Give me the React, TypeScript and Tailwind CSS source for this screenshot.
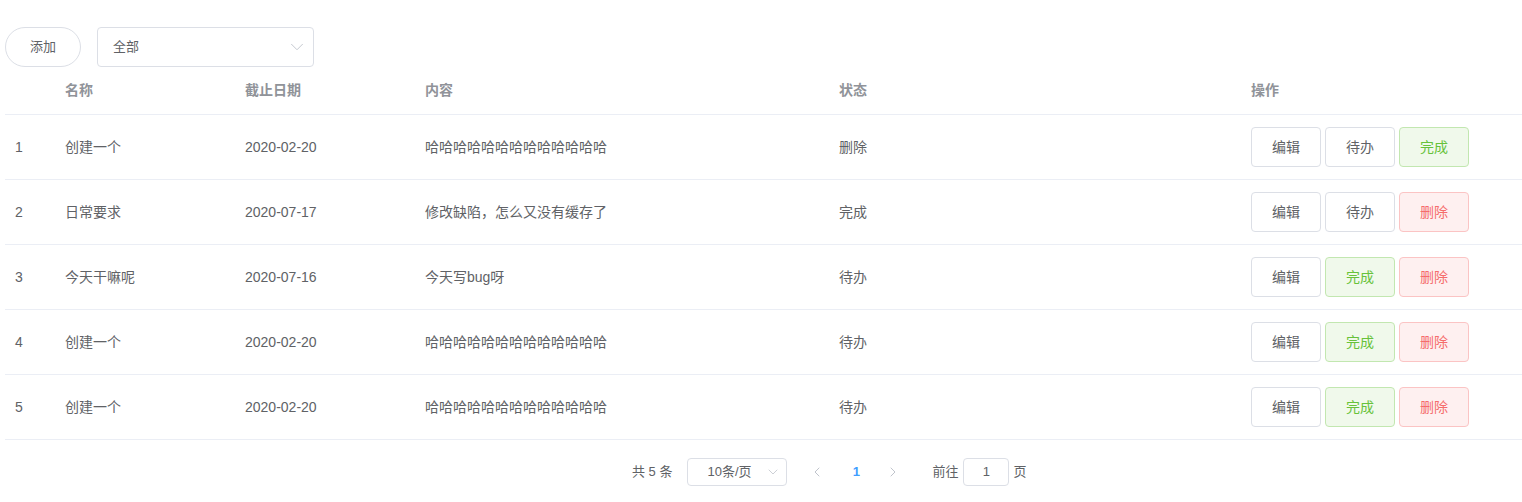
import { ChevronDown, ChevronLeft, ChevronRight } from "lucide-react";

type Row = { id: number; name: string; date: string; content: string; status: string; actions: ("edit" | "todo" | "done" | "del")[] };

const rows: Row[] = [
  { id: 1, name: "创建一个", date: "2020-02-20", content: "哈哈哈哈哈哈哈哈哈哈哈哈哈", status: "删除", actions: ["edit", "todo", "done"] },
  { id: 2, name: "日常要求", date: "2020-07-17", content: "修改缺陷，怎么又没有缓存了", status: "完成", actions: ["edit", "todo", "del"] },
  { id: 3, name: "今天干嘛呢", date: "2020-07-16", content: "今天写bug呀", status: "待办", actions: ["edit", "done", "del"] },
  { id: 4, name: "创建一个", date: "2020-02-20", content: "哈哈哈哈哈哈哈哈哈哈哈哈哈", status: "待办", actions: ["edit", "done", "del"] },
  { id: 5, name: "创建一个", date: "2020-02-20", content: "哈哈哈哈哈哈哈哈哈哈哈哈哈", status: "待办", actions: ["edit", "done", "del"] },
];

const btnStyle = {
  edit: "border-[#dcdfe6] bg-white text-[#606266]",
  todo: "border-[#dcdfe6] bg-white text-[#606266]",
  done: "border-[#c2e7b0] bg-[#f0f9eb] text-[#67c23a]",
  del: "border-[#fbc4c4] bg-[#fef0f0] text-[#f56c6c]",
};
const btnLabel = { edit: "编辑", todo: "待办", done: "完成", del: "删除" };

const cols = "grid grid-cols-[50px_180px_180px_414px_412px_1fr]";

export default function App() {
  return (
    <div className="min-h-screen bg-white pl-[5px] pt-[27px] text-[14px] text-[#606266]" style={{ fontFamily: '"Liberation Sans", "Noto Sans CJK SC", sans-serif' }}>
      <div className="flex items-center gap-4">
        <button className="h-10 w-[76px] rounded-full border border-[#dcdfe6] bg-white text-[13px] text-[#606266]">添加</button>
        <div className="flex h-10 w-[217px] items-center justify-between rounded border border-[#dcdfe6] pl-[15px] pr-[5px]">
          <span className="text-[13px]">全部</span>
          <ChevronDown size={22} strokeWidth={1} className="text-[#c0c4cc]" />
        </div>
      </div>

      <div className={`${cols} h-12 items-center border-b border-[#ebeef5] font-bold text-[#909399]`}>
        <div className="px-[10px]"></div>
        <div className="px-[10px]">名称</div>
        <div className="px-[10px]">截止日期</div>
        <div className="px-[10px]">内容</div>
        <div className="px-[10px]">状态</div>
        <div className="px-[10px]">操作</div>
      </div>

      {rows.map((r) => (
        <div key={r.id} className={`${cols} h-[65px] items-center border-b border-[#ebeef5]`}>
          <div className="px-[10px]">{r.id}</div>
          <div className="px-[10px]">{r.name}</div>
          <div className="px-[10px]">{r.date}</div>
          <div className="px-[10px]">{r.content}</div>
          <div className="px-[10px]">{r.status}</div>
          <div className="flex gap-1 px-[10px]">
            {r.actions.map((a, i) => (
              <button key={i} className={`h-10 w-[70px] rounded border text-[14px] ${btnStyle[a]}`}>{btnLabel[a]}</button>
            ))}
          </div>
        </div>
      ))}

      <div className="mt-[18px] flex items-center pl-[627px] text-[13px] text-[#606266]">
        <span className="mr-[15px]">共 5 条</span>
        <div className="flex h-7 w-[100px] items-center justify-between rounded border border-[#dcdfe6] pl-[19px] pr-[5px]">
          <span>10条/页</span>
          <ChevronDown size={16} strokeWidth={1.2} className="text-[#c0c4cc]" />
        </div>
        <div className="ml-[15px] flex h-7 w-[30px] items-center justify-center text-[#c0c4cc]">
          <ChevronLeft size={16} strokeWidth={1.5} />
        </div>
        <div className="ml-[6px] flex h-7 w-[36px] items-center justify-center font-bold text-[#409eff]">1</div>
        <div className="ml-[4px] flex h-7 w-[30px] items-center justify-center text-[#c0c4cc]">
          <ChevronRight size={16} strokeWidth={1.5} />
        </div>
        <span className="ml-[24px]">前往</span>
        <div className="ml-[5px] flex h-7 w-[46px] items-center justify-center rounded border border-[#dcdfe6]">1</div>
        <span className="ml-[4px]">页</span>
      </div>
    </div>
  );
}
